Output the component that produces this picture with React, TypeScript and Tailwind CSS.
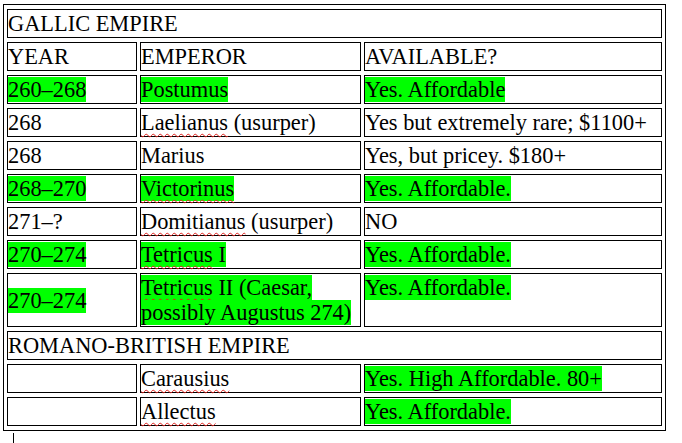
const rows = [
  { year: '260–268', emperor: 'Postumus', available: 'Yes. Affordable', yearHi: true, empHi: true, availHi: true, squiggle: [] as string[] },
  { year: '268', emperor: 'Laelianus (usurper)', available: 'Yes but extremely rare; $1100+', squiggle: ['Laelianus'] },
  { year: '268', emperor: 'Marius', available: 'Yes, but pricey. $180+', squiggle: [] },
  { year: '268–270', emperor: 'Victorinus', available: 'Yes. Affordable.', yearHi: true, empHi: true, availHi: true, squiggle: ['Victorinus'] },
  { year: '271–?', emperor: 'Domitianus (usurper)', available: 'NO', squiggle: ['Domitianus'] },
  { year: '270–274', emperor: 'Tetricus I', available: 'Yes. Affordable.', yearHi: true, empHi: true, availHi: true, squiggle: ['Tetricus'] },
  { year: '270–274', emperor: 'Tetricus II (Caesar, possibly Augustus 274)', available: 'Yes. Affordable.', yearHi: true, empHi: true, availHi: true, squiggle: ['Tetricus'] },
]

const british = [
  { emperor: 'Carausius', available: 'Yes. High Affordable. 80+' },
  { emperor: 'Allectus', available: 'Yes. Affordable.' },
]

const cell = 'border border-black p-0 pt-[1px] pb-[1px] align-top leading-[25px] font-normal text-left'

function Squiggly({ children }: { children: string }) {
  return (
    <span className="underline decoration-wavy decoration-[#e0201b] decoration-1 underline-offset-[3px]">
      {children}
    </span>
  )
}

// splits text so flagged words get the red wavy spell-check line
function Spell({ text, words }: { text: string; words: string[] }) {
  if (!words.length) return <>{text}</>
  const parts = text.split(new RegExp(`(${words.join('|')})`))
  return (
    <>
      {parts.map((p, i) => (words.includes(p) ? <Squiggly key={i}>{p}</Squiggly> : <span key={i}>{p}</span>))}
    </>
  )
}

function Hi({ on, children }: { on?: boolean; children: React.ReactNode }) {
  return <span className={on ? 'bg-[#00ff00]' : ''}>{children}</span>
}

export default function App() {
  return (
    <div className="min-h-[443px] bg-white pt-[4px] pl-[3px] text-[22.4px] text-black font-['Liberation_Serif','Times_New_Roman',serif]">
      <table className="border-separate border-spacing-x-[3px] border-spacing-y-[4px] border border-black">
        <tbody>
          <tr>
            <td colSpan={3} className={cell}>GALLIC EMPIRE</td>
          </tr>
          <tr>
            <td className={`${cell} w-[130px]`}>YEAR</td>
            <td className={`${cell} w-[221px]`}>EMPEROR</td>
            <td className={`${cell} w-[298px]`}>AVAILABLE?</td>
          </tr>
          {rows.map((r, i) => (
            <tr key={i}>
              <td className={`${cell} !align-middle`}>
                <Hi on={r.yearHi}>{r.year}</Hi>
              </td>
              <td className={cell}>
                <Hi on={r.empHi}>
                  <Spell text={r.emperor} words={r.squiggle} />
                </Hi>
              </td>
              <td className={cell}>
                <Hi on={r.availHi}>{r.available}</Hi>
              </td>
            </tr>
          ))}
          <tr>
            <td colSpan={3} className={cell}>ROMANO-BRITISH EMPIRE</td>
          </tr>
          {british.map((r) => (
            <tr key={r.emperor}>
              <td className={cell}>&nbsp;</td>
              <td className={cell}>
                <Squiggly>{r.emperor}</Squiggly>
              </td>
              <td className={cell}>
                <Hi on>{r.available}</Hi>
              </td>
            </tr>
          ))}
        </tbody>
      </table>
      <div className="ml-[10px] mt-[2px] h-[10px] w-px bg-black" />
    </div>
  )
}
